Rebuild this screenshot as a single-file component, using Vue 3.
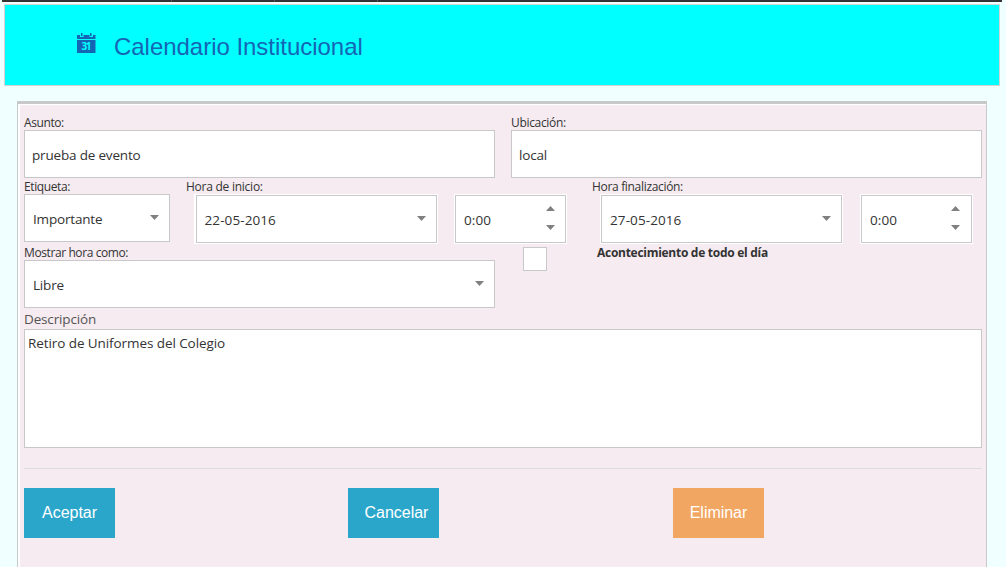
<script setup>
import { ref } from 'vue'

const subject = ref('prueba de evento')
const place = ref('local')
const description = ref('Retiro de Uniformes del Colegio')
const ranges = [
  { cls: 'start', label: 'Hora de inicio:', date: '22-05-2016', time: '0:00' },
  { cls: 'end', label: 'Hora finalización:', date: '27-05-2016', time: '0:00' },
]
</script>

<template>
  <div class="page">
    <nav class="topbar"><i></i><i></i><i></i></nav>
    <header class="banner">
      <svg class="cal" width="20" height="21" viewBox="0 0 20 21">
        <path d="M0 2H3v2h3.500V2h6v2h3.500V2h2.500v4H0z" fill="#1565b5" />
        <path d="M4 0h1.500v3H4zM13 0h1.500v3H13z" fill="#1565b5" />
        <path d="M0 7h18.500v13H0z" fill="#1565b5" />
        <text x="9.500" y="17" text-anchor="middle" textLength="10">31</text>
      </svg>
      <h1>Calendario Institucional</h1>
    </header>

    <main class="panel">
      <div class="row first">
        <div class="half">
          <label class="tight">Asunto:</label>
          <div class="field text"><span>{{ subject }}</span></div>
        </div>
        <div class="half">
          <label>Ubicación:</label>
          <div class="field text"><span>{{ place }}</span></div>
        </div>
      </div>

      <div class="row second">
        <div class="tag">
          <label class="tight">Etiqueta:</label>
          <div class="field"><span>Importante</span>
            <svg class="arrow" width="9" height="5"><path d="M0 0h9L4.500 5z" /></svg>
          </div>
        </div>
        <div v-for="r in ranges" :key="r.cls" class="range" :class="r.cls">
          <label>{{ r.label }}</label>
          <div class="pair">
            <div class="field date"><span>{{ r.date }}</span>
              <svg class="arrow" width="9" height="5"><path d="M0 0h9L4.500 5z" /></svg>
            </div>
            <div class="field time"><span>{{ r.time }}</span>
              <svg class="spin" width="9" height="24"><path d="M0 5h9L4.500 0zM0 19h9L4.500 24z" /></svg>
            </div>
          </div>
        </div>
      </div>

      <div class="row third">
        <div class="half">
          <label class="tight">Mostrar hora como:</label>
          <div class="field"><span>Libre</span>
            <svg class="arrow" width="9" height="5"><path d="M0 0h9L4.500 5z" /></svg>
          </div>
        </div>
        <div class="check"></div>
        <strong class="allday">Acontecimiento de todo el día</strong>
      </div>

      <div class="desc-label"><span>Descripción</span></div>
      <div class="area"><span>{{ description }}</span></div>
      <hr />
      <div class="actions">
        <button>Aceptar</button>
        <button class="cancel">Cancelar</button>
        <button class="warn">Eliminar</button>
      </div>
    </main>
  </div>
</template>

<style>
body { margin: 0; background: #f0ffff; overflow: hidden; }
</style>
<style scoped>
* { box-sizing: border-box; }
.page { width: 1006px; height: 567px; overflow: hidden; background: #f0ffff; font-family: "Open Sans", "Noto Sans", sans-serif; color: #333; }
.topbar { height: 2px; margin: 0 4px 0 2px; background: #333; display: flex; padding-left: 169px; gap: 102px; }
.topbar i { width: 1px; background: #555; }
.banner { margin: 2px 6px 0 4px; height: 82px; border: 1px solid #d3d3d3; background: #0ff; display: flex; padding: 28px 0 0 72px; }
.cal { flex: none; }
.cal text { font: 700 10px "Open Sans", sans-serif; fill: #0ff; }
h1 { margin: 0 0 0 17px; font: 400 24px/28px "Liberation Sans", Arial, sans-serif; letter-spacing: -0.03px; color: #1565b5; white-space: nowrap; }
.panel { margin: 15px 19px 0 17px; height: 500px; border: 1px solid #c8c8c8; border-top-width: 3px; background: #f5ebf0; box-shadow: inset 2px 1px 0 #fff; padding: 0 4px 0 6px; }
.row { display: flex; }
label { display: block; height: 15px; font-size: 12px; line-height: 16px; letter-spacing: -0.32px; white-space: nowrap; }
label.tight { letter-spacing: -0.4px; }
.start label { letter-spacing: -0.25px; }
.field span, .area span, .desc-label span, .allday { white-space: nowrap; }
.field { height: 48px; border: 1px solid #c8c8c8; background: #fff; display: flex; align-items: center; justify-content: space-between; padding: 2px 10px 0 8px; font-size: 13.5px; line-height: 18px; letter-spacing: -0.18px; }
.field.text { padding-left: 7px; }
.arrow, .spin { flex: none; fill: #808080; }
.arrow { margin-bottom: 4px; }
.spin { margin-bottom: 4px; }
.first { padding-top: 11px; gap: 16px; }
.half { width: 471px; }
.second { height: 66px; padding-top: 1px; }
.tag { width: 146px; }
.range { width: 390px; }
.start { margin-left: 16px; }
.end { margin-left: 16px; }
.pair { display: flex; gap: 18px; padding: 1px 0 0 10px; }
.end .pair { gap: 19px; padding-left: 9px; }
.pair .field { box-shadow: 0 0 0 1px #fff; letter-spacing: 0.1px; }
.start .date { padding-left: 7.5px; }
.start .date.field { box-shadow: 0 0 0 1px #fff, -1px 0 0 1px #fff; }
.date { width: 241px; flex: none; }
.time { width: 111px; flex: none; }
.end .time { padding-right: 11px; }
.third { height: 65px; padding-top: 1px; }
.check { width: 24px; height: 24px; margin: 2px 0 0 28px; border: 1px solid #c8c8c8; background: #fff; }
.allday { margin-left: 50px; font-size: 12px; line-height: 16px; letter-spacing: -0.28px; }
.desc-label { height: 20px; font-size: 13.5px; line-height: 20px; letter-spacing: -0.15px; color: #555; }
.area { height: 119px; border: 1px solid #c8c8c8; background: #fff; padding: 4px 3px; font-size: 13.5px; line-height: 19px; letter-spacing: -0.08px; }
hr { margin: 20px 0 19px; border: 0; height: 1px; background: #ddd; }
.actions { display: flex; gap: 233px; }
button { width: 91px; height: 50px; border: 0; padding: 0; background: #2ba6cb; color: #fff; font: 16px "Liberation Sans", Arial, sans-serif; letter-spacing: -0.03px; }
.cancel { padding-left: 6px; }
.warn { background: #f1a661; margin-left: 1px; }
</style>
